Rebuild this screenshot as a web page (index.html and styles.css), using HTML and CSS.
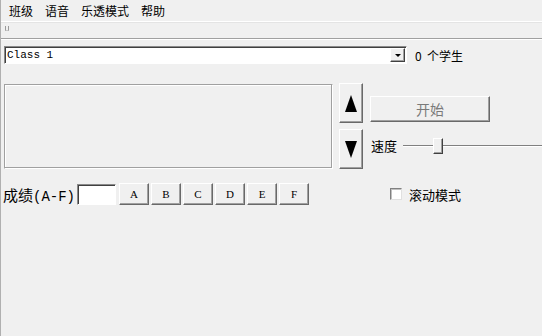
FILE: index.html
```html
<!DOCTYPE html>
<html lang="zh-CN">
<head>
  <meta charset="UTF-8">
  <title>班级点名</title>
  <link rel="stylesheet" href="styles.css">
</head>
<body>
  <div class="window">
    <nav class="menubar">
      <span class="menu-item">班级</span>
      <span class="menu-item">语音</span>
      <span class="menu-item">乐透模式</span>
      <span class="menu-item">帮助</span>
    </nav>
    <div class="toolbar"><span class="gripper"></span></div>

    <div class="class-row">
      <div class="combo">
        <span class="combo-text">Class 1</span>
        <span class="combo-btn"><span class="tri-small"></span></span>
      </div>
      <span class="count">0&nbsp; 个学生</span>
    </div>

    <div class="main-row">
      <div class="name-panel"></div>
      <div class="arrows">
        <div class="btn arrow-btn"><span class="tri-up"></span></div>
        <div class="btn arrow-btn"><span class="tri-down"></span></div>
      </div>
      <div class="controls">
        <div class="btn start-btn">开始</div>
        <div class="speed-row">
          <span class="label">速度</span>
          <div class="slider">
            <div class="track"></div>
            <div class="thumb"></div>
          </div>
        </div>
      </div>
    </div>

    <div class="grade-row">
      <span class="grade-label">成绩<span class="latin">(A-F)</span></span>
      <div class="grade-input"></div>
      <div class="grade-buttons">
        <div class="btn grade-btn">A</div>
        <div class="btn grade-btn">B</div>
        <div class="btn grade-btn">C</div>
        <div class="btn grade-btn">D</div>
        <div class="btn grade-btn">E</div>
        <div class="btn grade-btn">F</div>
      </div>
      <label class="check">
        <span class="box"></span>
        <span class="label">滚动模式</span>
      </label>
    </div>
  </div>
</body>
</html>
```

FILE: styles.css
```css
body {
  margin: 0;
  background-color: #f0f0f0;
  font-family: "Noto Sans CJK SC", "DejaVu Sans", sans-serif;
  font-size: 12px;
  color: #000;
}

.window {
  width: 542px;
  height: 336px;
  border-left: 1px solid #b0b0b0;
  box-sizing: border-box;
  overflow: hidden;
}

.menubar {
  display: flex;
  height: 21px;
  align-items: center;
  padding-left: 8px;
  gap: 12px;
  border-bottom: 1px solid #ffffff;
}

.menu-item {
  line-height: 14px;
}

.toolbar {
  height: 12px;
  border-top: 1px solid #e4e4e4;
  border-bottom: 1px solid #a0a0a0;
  box-shadow: 0 1px 0 #ffffff;
  padding: 3px 0 0 4px;
  box-sizing: content-box;
}

.gripper {
  display: block;
  width: 2px;
  height: 4px;
  border-left: 1px solid #9a9a9a;
  border-right: 1px solid #9a9a9a;
  border-bottom: 1px solid #c8c8c8;
}

.class-row {
  display: flex;
  align-items: center;
  margin-top: 7px;
  padding-left: 3px;
}

.combo {
  width: 403px;
  height: 18px;
  box-sizing: border-box;
  background: #fff;
  border: 1px solid;
  border-color: #8a8a8a #ffffff #ffffff #8a8a8a;
  box-shadow: inset 1px 1px 0 #404040;
  display: flex;
  align-items: center;
  justify-content: space-between;
  padding: 0 1px 0 2px;
}

.combo-text {
  font-family: "Liberation Mono", monospace;
  font-size: 11px;
}

.combo-btn {
  width: 15px;
  height: 14px;
  box-sizing: border-box;
  background: #f0f0f0;
  border: 1px solid;
  border-color: #ffffff #404040 #404040 #ffffff;
  box-shadow: inset -1px -1px 0 #a0a0a0;
  display: flex;
  align-items: center;
  justify-content: center;
}

.tri-small {
  width: 0;
  height: 0;
  border-left: 3px solid transparent;
  border-right: 3px solid transparent;
  border-top: 3px solid #000;
}

.count {
  margin-left: 8px;
  font-size: 12px;
}

.main-row {
  display: flex;
  margin-top: 19px;
  padding-left: 3px;
}

.name-panel {
  flex: none;
  width: 329px;
  height: 85px;
  margin-top: 1px;
  box-sizing: border-box;
  border: 1px solid;
  border-color: #a0a0a0 #ffffff #ffffff #a0a0a0;
  box-shadow: inset -1px -1px 0 #a0a0a0, inset 1px 1px 0 #ffffff;
}

.btn {
  background: #f0f0f0;
  border: 1px solid;
  border-color: #ffffff #696969 #696969 #ffffff;
  box-shadow: inset -1px -1px 0 #a0a0a0;
  box-sizing: border-box;
  display: flex;
  align-items: center;
  justify-content: center;
}

.arrows {
  flex: none;
  display: flex;
  flex-direction: column;
  gap: 6px;
  margin-left: 6px;
}

.arrow-btn {
  width: 24px;
  height: 40px;
}

.tri-up {
  width: 0;
  height: 0;
  border-left: 6px solid transparent;
  border-right: 6px solid transparent;
  border-bottom: 17px solid #000;
}

.tri-down {
  width: 0;
  height: 0;
  border-left: 6px solid transparent;
  border-right: 6px solid transparent;
  border-top: 17px solid #000;
}

.controls {
  flex: 1;
  min-width: 0;
  margin-left: 7px;
  display: flex;
  flex-direction: column;
}

.start-btn {
  width: 120px;
  height: 26px;
  margin-top: 13px;
  font-size: 14px;
  color: #7a7a7a;
}

.speed-row {
  display: flex;
  align-items: center;
  margin-top: 14px;
  margin-left: 1px;
}

.speed-row .label {
  flex: none;
  white-space: nowrap;
  font-size: 13px;
}

.slider {
  position: relative;
  flex: 1;
  height: 18px;
  margin-left: 6px;
}

.track {
  position: absolute;
  left: 0;
  right: 0;
  top: 8px;
  height: 0;
  border-top: 1px solid #808080;
  border-bottom: 1px solid #ffffff;
}

.thumb {
  position: absolute;
  left: 30px;
  top: 1px;
  width: 10px;
  height: 16px;
  box-sizing: border-box;
  background: #f0f0f0;
  border: 1px solid;
  border-color: #ffffff #404040 #404040 #ffffff;
  box-shadow: inset -1px -1px 0 #a0a0a0;
}

.grade-row {
  display: flex;
  align-items: center;
  margin-top: 14px;
  padding-left: 2px;
}

.grade-label {
  font-size: 15px;
  white-space: nowrap;
}

.grade-label .latin {
  font-family: "Liberation Mono", monospace;
  font-size: 14px;
}

.grade-input {
  width: 39px;
  height: 21px;
  margin-left: 2px;
  box-sizing: border-box;
  background: #fff;
  border: 1px solid;
  border-color: #8a8a8a #ffffff #ffffff #8a8a8a;
  box-shadow: inset 1px 1px 0 #404040;
}

.grade-buttons {
  display: flex;
  gap: 2px;
  margin-left: 3px;
}

.grade-btn {
  width: 30px;
  height: 22px;
  font-family: "Liberation Serif", serif;
  font-size: 11px;
}

.check {
  display: flex;
  align-items: center;
  margin-left: 81px;
}

.box {
  width: 12px;
  height: 12px;
  box-sizing: border-box;
  background: #fff;
  border: 1px solid;
  border-color: #808080 #e0e0e0 #e0e0e0 #808080;
  box-shadow: inset 1px 1px 0 #c0c0c0;
}

.check .label {
  margin-left: 7px;
  font-size: 13px;
}
```
